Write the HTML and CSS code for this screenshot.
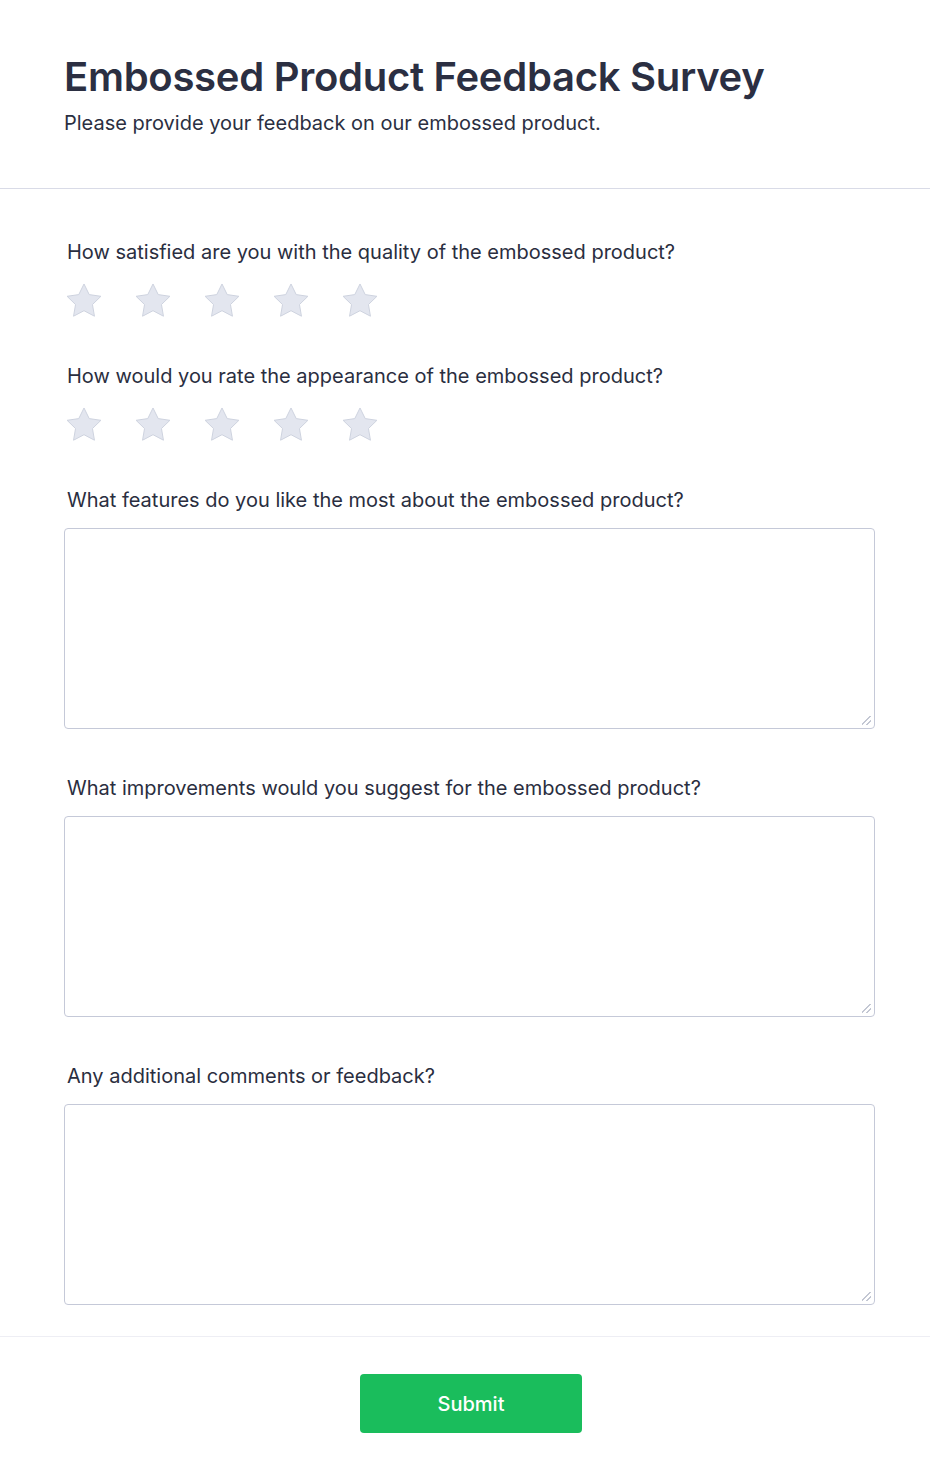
FILE: index.html
```html
<!DOCTYPE html>
<html lang="en">
<head>
<meta charset="utf-8">
<title>Embossed Product Feedback Survey</title>
<link rel="stylesheet" href="styles.css">
</head>
<body>
<header class="header">
  <h1 class="title">Embossed Product Feedback Survey</h1>
  <p class="subtitle">Please provide your feedback on our embossed product.</p>
</header>
<form class="form">
  <div class="question rating">
    <label class="label">How satisfied are you with the quality of the embossed product?</label>
    <div class="stars">
      <svg class="star" viewBox="1.5 1.5 21 20"><path d="M12 2.6l2.9 5.9 6.5.95-4.7 4.58 1.1 6.47L12 17.45l-5.8 3.05 1.1-6.47-4.7-4.58 6.5-.95z"/></svg>
      <svg class="star" viewBox="1.5 1.5 21 20"><path d="M12 2.6l2.9 5.9 6.5.95-4.7 4.58 1.1 6.47L12 17.45l-5.8 3.05 1.1-6.47-4.7-4.58 6.5-.95z"/></svg>
      <svg class="star" viewBox="1.5 1.5 21 20"><path d="M12 2.6l2.9 5.9 6.5.95-4.7 4.58 1.1 6.47L12 17.45l-5.8 3.05 1.1-6.47-4.7-4.58 6.5-.95z"/></svg>
      <svg class="star" viewBox="1.5 1.5 21 20"><path d="M12 2.6l2.9 5.9 6.5.95-4.7 4.58 1.1 6.47L12 17.45l-5.8 3.05 1.1-6.47-4.7-4.58 6.5-.95z"/></svg>
      <svg class="star" viewBox="1.5 1.5 21 20"><path d="M12 2.6l2.9 5.9 6.5.95-4.7 4.58 1.1 6.47L12 17.45l-5.8 3.05 1.1-6.47-4.7-4.58 6.5-.95z"/></svg>
    </div>
  </div>
  <div class="question rating">
    <label class="label">How would you rate the appearance of the embossed product?</label>
    <div class="stars">
      <svg class="star" viewBox="1.5 1.5 21 20"><path d="M12 2.6l2.9 5.9 6.5.95-4.7 4.58 1.1 6.47L12 17.45l-5.8 3.05 1.1-6.47-4.7-4.58 6.5-.95z"/></svg>
      <svg class="star" viewBox="1.5 1.5 21 20"><path d="M12 2.6l2.9 5.9 6.5.95-4.7 4.58 1.1 6.47L12 17.45l-5.8 3.05 1.1-6.47-4.7-4.58 6.5-.95z"/></svg>
      <svg class="star" viewBox="1.5 1.5 21 20"><path d="M12 2.6l2.9 5.9 6.5.95-4.7 4.58 1.1 6.47L12 17.45l-5.8 3.05 1.1-6.47-4.7-4.58 6.5-.95z"/></svg>
      <svg class="star" viewBox="1.5 1.5 21 20"><path d="M12 2.6l2.9 5.9 6.5.95-4.7 4.58 1.1 6.47L12 17.45l-5.8 3.05 1.1-6.47-4.7-4.58 6.5-.95z"/></svg>
      <svg class="star" viewBox="1.5 1.5 21 20"><path d="M12 2.6l2.9 5.9 6.5.95-4.7 4.58 1.1 6.47L12 17.45l-5.8 3.05 1.1-6.47-4.7-4.58 6.5-.95z"/></svg>
    </div>
  </div>
  <div class="question text">
    <label class="label">What features do you like the most about the embossed product?</label>
    <textarea class="textarea"></textarea>
  </div>
  <div class="question text">
    <label class="label">What improvements would you suggest for the embossed product?</label>
    <textarea class="textarea"></textarea>
  </div>
  <div class="question text last">
    <label class="label">Any additional comments or feedback?</label>
    <textarea class="textarea"></textarea>
  </div>
</form>
<footer class="footer">
  <button class="submit" type="button">Submit</button>
</footer>
</body>
</html>
```

FILE: styles.css
```css
* { box-sizing: border-box; }

html, body {
  margin: 0;
  padding: 0;
  background: #ffffff;
}

body {
  width: 930px;
  font-family: Inter, "Noto Sans", "Liberation Sans", sans-serif;
  color: #2d3142;
}

.header {
  padding: 57px 64px 51px;
  border-bottom: 1px solid #d9dbe7;
}

.title {
  margin: 0;
  font-size: 40px;
  line-height: 40px;
  font-weight: 600;
  letter-spacing: -0.28px;
  color: #2b2f42;
}

.subtitle {
  margin: 12px 0 0;
  font-size: 20px;
  line-height: 28px;
  font-weight: 400;
  color: #2b2f42;
}

.form {
  padding: 47px 55px 31px 64px;
  display: flex;
  flex-direction: column;
}

.question {
  display: flex;
  flex-direction: column;
}

.question.rating { margin-bottom: 40px; }
.question.text { margin-bottom: 43px; }
.question.text.last { margin-bottom: 0; }

.label {
  display: block;
  font-size: 20px;
  line-height: 28px;
  font-weight: 400;
  color: #2a2e40;
  margin: 2px 0 14px 3px;
}

.stars {
  display: flex;
  align-items: center;
  gap: 31px;
  height: 40px;
  margin-left: 1px;
}

.star {
  width: 38px;
  height: 36px;
  display: block;
}

.star path {
  fill: #e3e6ef;
  stroke: #cdd2df;
  stroke-width: 0.55;
  stroke-linejoin: round;
}

.textarea {
  display: block;
  width: 811px;
  height: 201px;
  margin: 0;
  padding: 8px 12px;
  border: 1px solid #c5c9d8;
  border-radius: 4px;
  background: #ffffff;
  font-family: Inter, "Noto Sans", sans-serif;
  font-size: 16px;
  resize: vertical;
}

.textarea::-webkit-resizer {
  background-image:
    linear-gradient(135deg,
      transparent 0 40%,
      #c3c7d3 40% 52%,
      transparent 52% 68%,
      #c3c7d3 68% 80%,
      transparent 80%);
  background-size: 9px 9px;
  background-position: right 3px bottom 3px;
  background-repeat: no-repeat;
}

.footer {
  border-top: 1px solid #eeeef4;
  padding: 37px 50px 50px 62px;
  display: flex;
  justify-content: center;
}

.submit {
  width: 222px;
  height: 59px;
  border: none;
  border-radius: 4px;
  background: #1abd5c;
  color: #ffffff;
  font-family: Inter, "Noto Sans", sans-serif;
  font-size: 20px;
  font-weight: 500;
  cursor: pointer;
}
```
